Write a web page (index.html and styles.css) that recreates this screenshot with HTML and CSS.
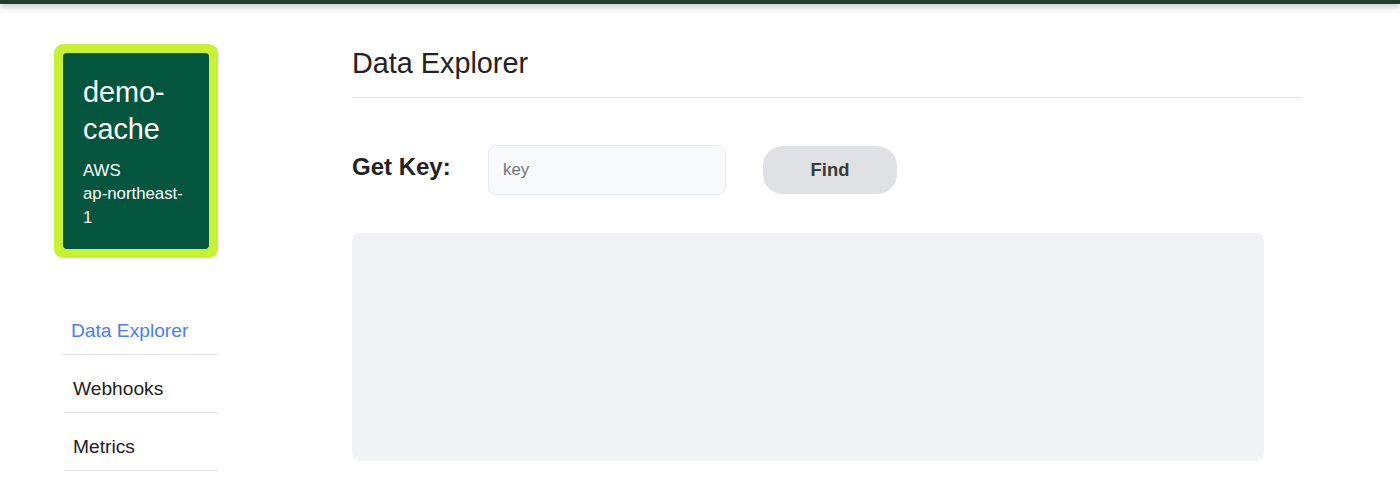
FILE: index.html
```html
<!DOCTYPE html>
<html lang="en">
<head>
<meta charset="utf-8">
<title>Data Explorer</title>
<link rel="stylesheet" href="styles.css">
</head>
<body>
<div class="topbar"></div>
<div class="layout">
  <aside class="sidebar">
    <div class="cache-card">
      <div class="cache-inner">
        <div class="cache-name">demo-cache</div>
        <div class="cache-meta">
          <div class="cache-provider">AWS</div>
          <div class="cache-region">ap-northeast-1</div>
        </div>
      </div>
    </div>
    <nav class="nav">
      <a class="nav-item active" href="#">Data Explorer</a>
      <a class="nav-item" href="#">Webhooks</a>
      <a class="nav-item" href="#">Metrics</a>
    </nav>
  </aside>
  <main class="main">
    <h1 class="page-title">Data Explorer</h1>
    <div class="key-row">
      <label class="key-label" for="key">Get Key:</label>
      <input class="key-input" id="key" type="text" placeholder="key">
      <button class="find-btn" type="button">Find</button>
    </div>
    <div class="result-panel"></div>
  </main>
</div>
</body>
</html>
```

FILE: styles.css
```css
* { box-sizing: border-box; }

html, body {
  margin: 0;
  padding: 0;
  background: #ffffff;
  font-family: "Liberation Sans", Arial, sans-serif;
  color: #222222;
}

.topbar {
  height: 4px;
  background: #253b2b;
  box-shadow: 0 2px 7px rgba(0, 0, 0, 0.35);
  position: relative;
  z-index: 1;
}

.layout {
  display: flex;
  align-items: flex-start;
  padding-top: 40px;
}

.sidebar {
  width: 164px;
  margin-left: 54px;
  flex: none;
}

.cache-card {
  background: #c6f135;
  padding: 9px;
  border-radius: 9px;
}

.cache-inner {
  background: #03553d;
  border-radius: 4px;
  padding: 21px 20px 20px 20px;
  color: #ffffff;
}

.cache-name {
  font-size: 28.8px;
  line-height: 37.4px;
}

.cache-meta {
  margin-top: 10px;
  font-size: 16.8px;
  line-height: 23.5px;
}

.nav {
  margin-top: 39px;
  margin-left: 8px;
  display: flex;
  flex-direction: column;
}

.nav-item {
  display: block;
  font-size: 19.2px;
  line-height: 22px;
  padding: 23px 0 12px 9px;
  margin-left: 2px;
  border-bottom: 1px solid #e5e7eb;
  color: #222222;
  text-decoration: none;
}

.nav-item.active {
  margin-left: 0;
  color: #4b7ff0;
}

.main {
  margin-left: 134px;
  width: 950px;
  padding-top: 3px;
}

.page-title {
  margin: 0;
  font-size: 28.8px;
  font-weight: normal;
  line-height: 33px;
  padding-bottom: 17px;
  border-bottom: 1px solid #e6e8eb;
  color: #222222;
}

.key-row {
  display: flex;
  align-items: center;
  margin-top: 47px;
  height: 50px;
}

.key-label {
  width: 136px;
  flex: none;
  font-size: 24px;
  font-weight: bold;
  line-height: 28px;
  margin-bottom: 7px;
  color: #222222;
}

.key-input {
  width: 238px;
  height: 50px;
  flex: none;
  background: #f7f9fb;
  border: 1px solid #e3eefa;
  border-radius: 8px;
  padding: 0 14px;
  font-family: "Liberation Sans", Arial, sans-serif;
  font-size: 16.8px;
  color: #222222;
  outline: none;
}

.key-input::placeholder {
  color: #6f757d;
}

.find-btn {
  width: 134px;
  height: 48px;
  flex: none;
  margin-left: 37px;
  background: #dfe1e5;
  border: none;
  border-radius: 20px;
  font-family: "Liberation Sans", Arial, sans-serif;
  font-size: 18.4px;
  font-weight: bold;
  color: #3a3a3a;
  padding: 0;
}

.result-panel {
  margin-top: 38px;
  width: 912px;
  height: 228px;
  background: #f2f3f5;
  border-radius: 8px;
}
```
